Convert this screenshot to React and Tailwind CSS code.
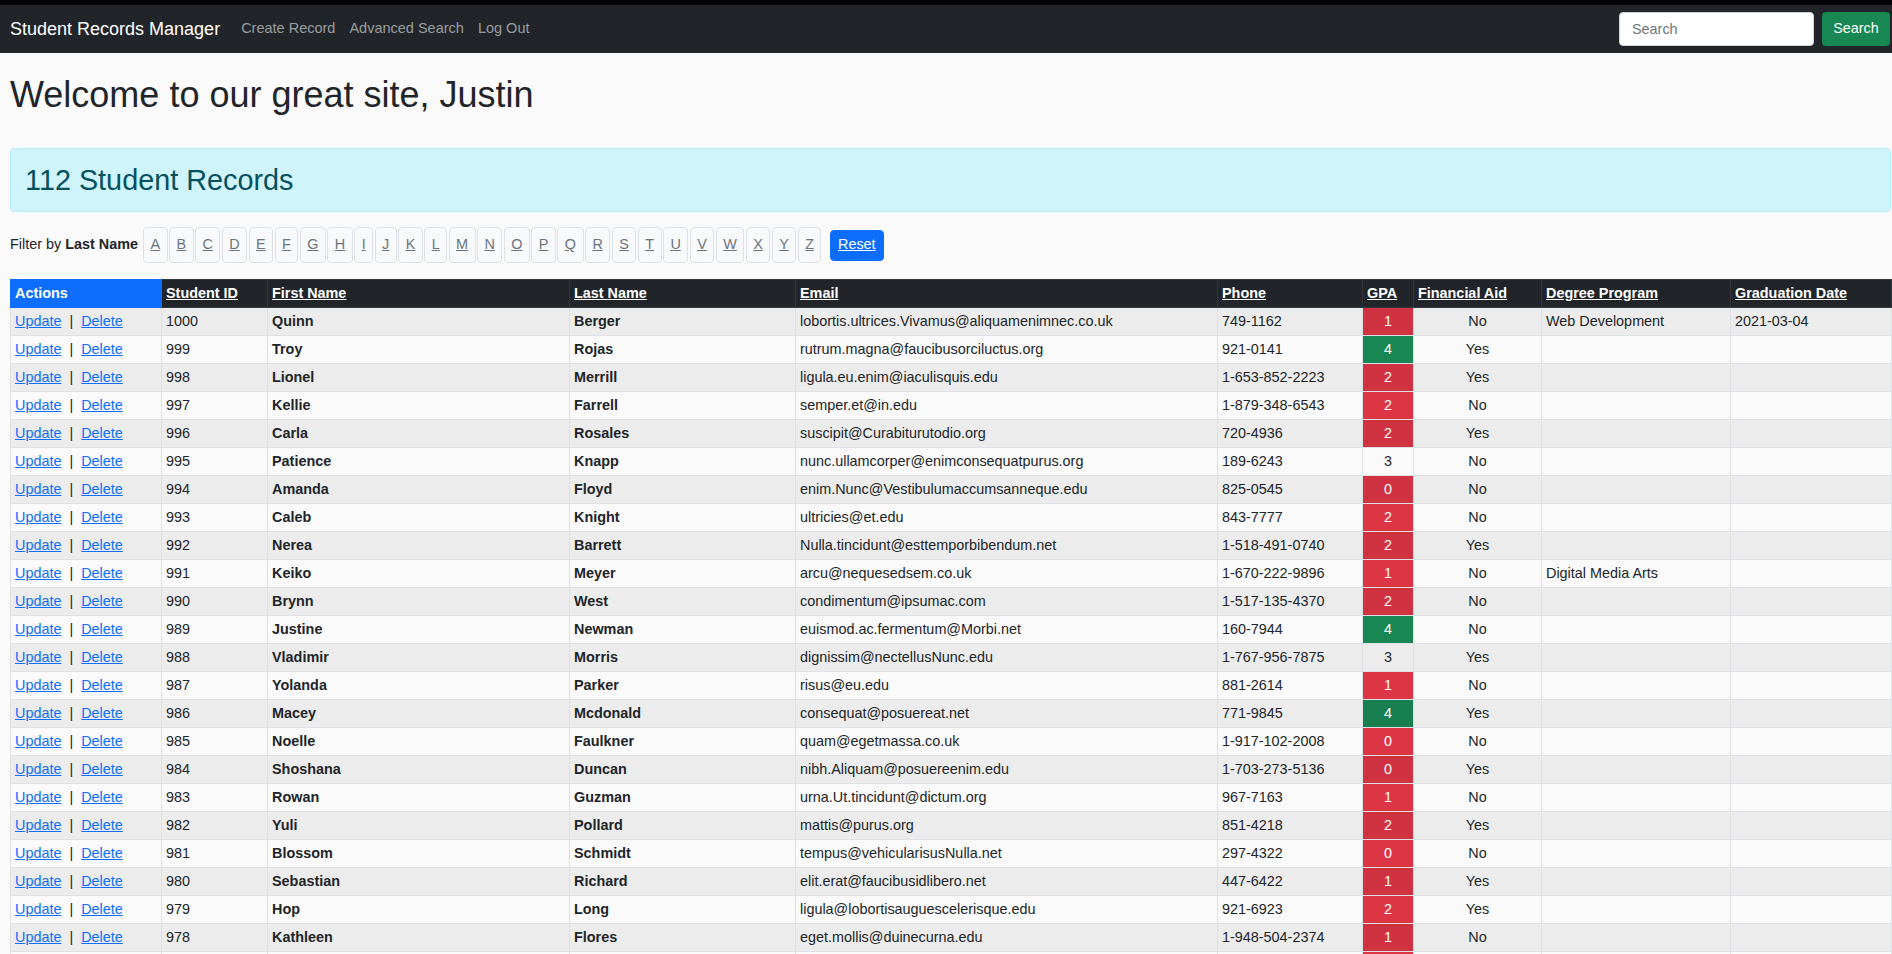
import React from "react";

const rows = [
  [1000, "Quinn", "Berger", "lobortis.ultrices.Vivamus@aliquamenimnec.co.uk", "749-1162", 1, "No", "Web Development", "2021-03-04"],
  [999, "Troy", "Rojas", "rutrum.magna@faucibusorciluctus.org", "921-0141", 4, "Yes", "", ""],
  [998, "Lionel", "Merrill", "ligula.eu.enim@iaculisquis.edu", "1-653-852-2223", 2, "Yes", "", ""],
  [997, "Kellie", "Farrell", "semper.et@in.edu", "1-879-348-6543", 2, "No", "", ""],
  [996, "Carla", "Rosales", "suscipit@Curabiturutodio.org", "720-4936", 2, "Yes", "", ""],
  [995, "Patience", "Knapp", "nunc.ullamcorper@enimconsequatpurus.org", "189-6243", 3, "No", "", ""],
  [994, "Amanda", "Floyd", "enim.Nunc@Vestibulumaccumsanneque.edu", "825-0545", 0, "No", "", ""],
  [993, "Caleb", "Knight", "ultricies@et.edu", "843-7777", 2, "No", "", ""],
  [992, "Nerea", "Barrett", "Nulla.tincidunt@esttemporbibendum.net", "1-518-491-0740", 2, "Yes", "", ""],
  [991, "Keiko", "Meyer", "arcu@nequesedsem.co.uk", "1-670-222-9896", 1, "No", "Digital Media Arts", ""],
  [990, "Brynn", "West", "condimentum@ipsumac.com", "1-517-135-4370", 2, "No", "", ""],
  [989, "Justine", "Newman", "euismod.ac.fermentum@Morbi.net", "160-7944", 4, "No", "", ""],
  [988, "Vladimir", "Morris", "dignissim@nectellusNunc.edu", "1-767-956-7875", 3, "Yes", "", ""],
  [987, "Yolanda", "Parker", "risus@eu.edu", "881-2614", 1, "No", "", ""],
  [986, "Macey", "Mcdonald", "consequat@posuereat.net", "771-9845", 4, "Yes", "", ""],
  [985, "Noelle", "Faulkner", "quam@egetmassa.co.uk", "1-917-102-2008", 0, "No", "", ""],
  [984, "Shoshana", "Duncan", "nibh.Aliquam@posuereenim.edu", "1-703-273-5136", 0, "Yes", "", ""],
  [983, "Rowan", "Guzman", "urna.Ut.tincidunt@dictum.org", "967-7163", 1, "No", "", ""],
  [982, "Yuli", "Pollard", "mattis@purus.org", "851-4218", 2, "Yes", "", ""],
  [981, "Blossom", "Schmidt", "tempus@vehicularisusNulla.net", "297-4322", 0, "No", "", ""],
  [980, "Sebastian", "Richard", "elit.erat@faucibusidlibero.net", "447-6422", 1, "Yes", "", ""],
  [979, "Hop", "Long", "ligula@lobortisauguescelerisque.edu", "921-6923", 2, "Yes", "", ""],
  [978, "Kathleen", "Flores", "eget.mollis@duinecurna.edu", "1-948-504-2374", 1, "No", "", ""],
  [977, "Ivor", "Hardin", "nec.ante@Nullam.org", "1-266-405-1180", 2, "No", "", ""],
  [976, "Dana", "Cobb", "sed@loremipsum.com", "512-3309", 3, "Yes", "", ""],
];

const letters = "ABCDEFGHIJKLMNOPQRSTUVWXYZ".split("");

const headers = ["Student ID", "First Name", "Last Name", "Email", "Phone", "GPA", "Financial Aid", "Degree Program", "Graduation Date"];
const widths = [151, 106, 302, 226, 422, 145, 51, 128, 189, 161];

function gpaClass(g, striped) {
  if (g === 4) return striped ? "bg-[#188050] text-white" : "bg-[#198754] text-white";
  if (g === 3) return "";
  return striped ? "bg-[#d13241] text-white" : "bg-[#dc3545] text-white";
}

export default function App() {
  return (
    <div className="min-h-screen bg-[#fafafa] font-['Liberation_Sans',Arial,sans-serif] text-[#212529]">
      <div className="h-[5px] bg-black" />
      <nav className="h-[48px] bg-[#212529] flex items-center pl-[10px] pr-[2px]">
        <span className="text-[18px] text-white mr-[14px] leading-none">Student Records Manager</span>
        <a className="px-[7px] text-[14.5px] text-[#9a9da0]">Create Record</a>
        <a className="px-[7px] text-[14.5px] text-[#9a9da0]">Advanced Search</a>
        <a className="px-[7px] text-[14.5px] text-[#9a9da0]">Log Out</a>
        <div className="ml-auto flex items-center">
          <input
            placeholder="Search"
            className="w-[195px] h-[34px] bg-white border border-[#ced4da] rounded-[4px] px-[12px] text-[14.4px] text-[#212529] placeholder:text-[#6c757d] outline-none"
          />
          <button className="ml-[8px] w-[68px] h-[34px] bg-[#198754] text-white text-[14.4px] rounded-[4px]">Search</button>
        </div>
      </nav>
      <main className="pl-[10px] pr-[1px]">
        <h1 className="mt-[21px] mb-[32px] text-[36px] leading-[42px] font-normal">Welcome to our great site, Justin</h1>
        <div className="h-[64px] bg-[#cff4fc] border border-[#b6effb] rounded-[4px] flex items-center px-[14px]">
          <h2 className="text-[28.8px] leading-[34px] text-[#055160] font-normal">112 Student Records</h2>
        </div>
        <div className="mt-[15px] h-[36px] flex items-center text-[14.4px]">
          <span>
            Filter by <b>Last Name</b>
          </span>
          <div className="ml-[5px] flex gap-[1.4px]">
            {letters.map((l) => (
              <a
                key={l}
                className="h-[36px] px-[6.5px] flex items-center bg-[#f8f9fa] border border-[#dee2e6] rounded-[4px] text-[#6c757d] underline"
              >
                {l}
              </a>
            ))}
          </div>
          <a className="ml-[8.5px] h-[31px] px-[7px] flex items-center bg-[#0d6efd] border border-[#0d6efd] rounded-[4px] text-white underline">
            Reset
          </a>
        </div>
        <table className="mt-[16px] w-full table-fixed border-collapse text-[14.4px] leading-[21px]">
          <colgroup>
            {widths.map((w, i) => (
              <col key={i} style={{ width: w }} />
            ))}
          </colgroup>
          <thead>
            <tr className="h-[28px]">
              <th className="bg-[#0d6efd] text-white text-left font-bold px-[4px] py-0 border border-[#0d6efd]">Actions</th>
              {headers.map((h) => (
                <th key={h} className="bg-[#212529] text-white text-left font-bold px-[4px] py-0 border border-[#32383e]">
                  <span className="underline">{h}</span>
                </th>
              ))}
            </tr>
          </thead>
          <tbody>
            {rows.map((r, i) => {
              const striped = i % 2 === 0;
              const cell = "px-[4px] py-0 border border-[#dee2e6] whitespace-nowrap overflow-hidden";
              return (
                <tr key={r[0]} className={`h-[28px] ${striped ? "bg-[#ececec]" : "bg-[#fafafa]"}`}>
                  <td className={cell}>
                    <a className="text-[#0d6efd] underline">Update</a>
                    <span className="mx-[8px]">|</span>
                    <a className="text-[#0d6efd] underline">Delete</a>
                  </td>
                  <td className={cell}>{r[0]}</td>
                  <td className={`${cell} font-bold`}>{r[1]}</td>
                  <td className={`${cell} font-bold`}>{r[2]}</td>
                  <td className={cell}>{r[3]}</td>
                  <td className={cell}>{r[4]}</td>
                  <td className={`${cell} text-center ${gpaClass(r[5], striped)}`}>{r[5]}</td>
                  <td className={`${cell} text-center`}>{r[6]}</td>
                  <td className={cell}>{r[7]}</td>
                  <td className={cell}>{r[8]}</td>
                </tr>
              );
            })}
          </tbody>
        </table>
      </main>
    </div>
  );
}
